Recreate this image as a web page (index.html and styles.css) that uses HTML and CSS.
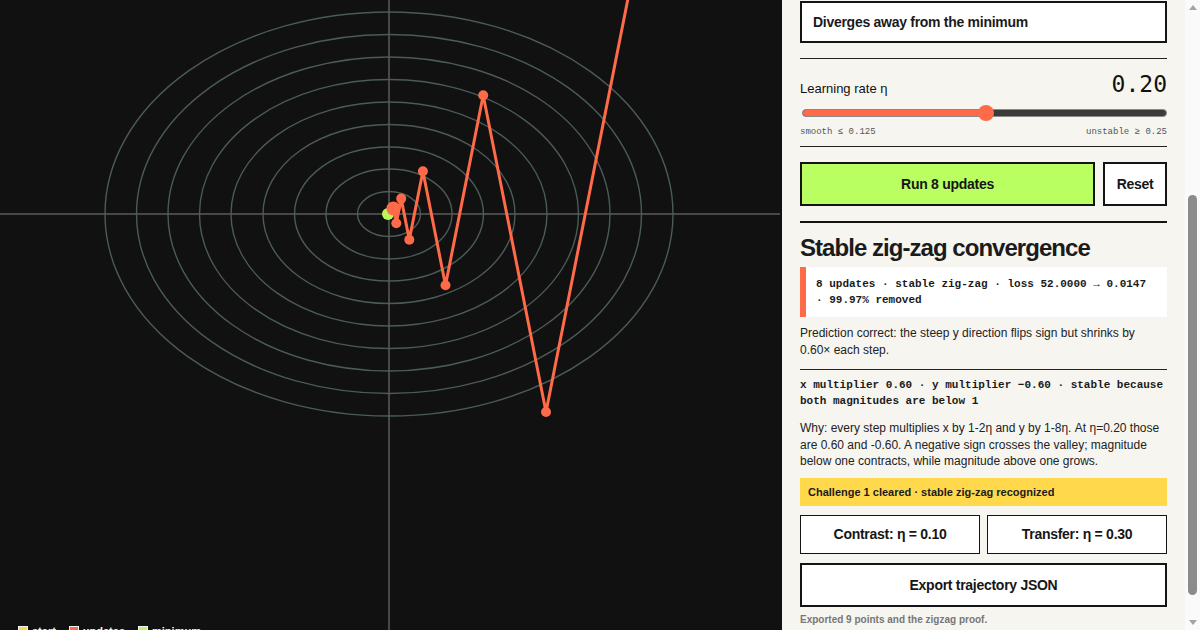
FILE: index.html
```html
<!DOCTYPE html>
<html lang="en">
<head>
<meta charset="utf-8">
<title>Zig-zag valley</title>
<link rel="stylesheet" href="styles.css">
</head>
<body>
<div class="app">
  <section class="stage">
    <svg class="plot" width="782" height="630" viewBox="0 0 782 630">
      <g class="contours">
        <ellipse cx="389" cy="214" rx="284" ry="202"/>
        <ellipse cx="389" cy="214" rx="252.5" ry="179.5"/>
        <ellipse cx="389" cy="214" rx="221" ry="157"/>
        <ellipse cx="389" cy="214" rx="189.5" ry="134.5"/>
        <ellipse cx="389" cy="214" rx="158" ry="112"/>
        <ellipse cx="389" cy="214" rx="126" ry="89.5"/>
        <ellipse cx="389" cy="214" rx="94.5" ry="67"/>
        <ellipse cx="389" cy="214" rx="63" ry="45"/>
        <ellipse cx="389" cy="214" rx="31.5" ry="22.5"/>
      </g>
      <g class="axes">
        <line x1="389" y1="0" x2="389" y2="630"/>
        <line x1="0" y1="214" x2="780" y2="214"/>
      </g>
      <circle class="minimum" cx="388" cy="214" r="6"/>
      <polyline class="path" points="650.7,-116 546,412 483.2,95.2 445.5,285.3 422.9,171.2 409.3,239.7 401.2,198.6 396.3,223.2 393.4,208.5"/>
      <g class="dots">
        <circle cx="546" cy="412" r="5"/>
        <circle cx="483.2" cy="95.2" r="5"/>
        <circle cx="445.5" cy="285.3" r="5"/>
        <circle cx="422.9" cy="171.2" r="5"/>
        <circle cx="409.3" cy="239.7" r="5"/>
        <circle cx="401.2" cy="198.6" r="5"/>
        <circle cx="396.3" cy="223.2" r="5"/>
        <circle cx="393.4" cy="208.5" r="7"/>
      </g>
    </svg>
    <div class="legend">
      <span class="legend-item"><i class="swatch swatch-start"></i>start</span>
      <span class="legend-item"><i class="swatch swatch-update"></i>updates</span>
      <span class="legend-item"><i class="swatch swatch-min"></i>minimum</span>
    </div>
  </section>

  <aside class="panel">
    <div class="intro">
      <p class="eyebrow">Challenge 1 · gradient descent</p>
      <h1 class="title">Zig-zag in a narrow valley</h1>
      <p class="lead">Loss f(x, y) = x² + 4y², starting at (4, 3). The valley is four times steeper along y than along x. Predict what 8 updates will do before you run them.</p>
    </div>
    <p class="ask">Your prediction for η = 0.20</p>
    <div class="options">
      <button class="option">Slides straight into the minimum</button>
      <button class="option option-picked">Zig-zags across the valley but settles</button>
      <button class="option option-last">Diverges away from the minimum</button>
    </div>

    <hr class="rule">

    <div class="rate">
      <div class="rate-head">
        <span class="rate-label">Learning rate η</span>
        <span class="rate-value">0.20</span>
      </div>
      <div class="slider">
        <div class="track"><div class="fill" style="width:50.3%"></div></div>
        <div class="thumb" style="left:50.3%"></div>
      </div>
      <div class="slider-marks">
        <span>smooth ≤ 0.125</span>
        <span>unstable ≥ 0.25</span>
      </div>
    </div>

    <hr class="rule">

    <div class="actions">
      <button class="btn btn-run">Run 8 updates</button>
      <button class="btn btn-reset">Reset</button>
    </div>

    <hr class="rule rule-thick">

    <h2 class="result-title">Stable zig-zag convergence</h2>
    <div class="stat">8 updates · stable zig-zag · loss 52.0000 → 0.0147 · 99.97% removed</div>
    <p class="copy">Prediction correct: the steep y direction flips sign but shrinks by 0.60× each step.</p>

    <hr class="rule">

    <p class="proof">x multiplier 0.60 · y multiplier −0.60 · stable because both magnitudes are below 1</p>
    <p class="copy copy-why">Why: every step multiplies x by 1-2η and y by 1-8η. At η=0.20 those are 0.60 and -0.60. A negative sign crosses the valley; magnitude below one contracts, while magnitude above one grows.</p>

    <div class="banner">Challenge 1 cleared · stable zig-zag recognized</div>

    <div class="pair">
      <button class="btn btn-thin">Contrast: η = 0.10</button>
      <button class="btn btn-thin">Transfer: η = 0.30</button>
    </div>
    <button class="btn btn-export">Export trajectory JSON</button>
    <p class="note">Exported 9 points and the zigzag proof.</p>
  </aside>

  <div class="scrollbar" aria-hidden="true">
    <span class="sb-btn sb-up"></span>
    <span class="sb-track"><span class="sb-thumb"></span></span>
    <span class="sb-btn sb-down"></span>
  </div>
</div>
<script src="script.js"></script>
</body>
</html>
```

FILE: styles.css
```css
* { box-sizing: border-box; }
html, body { margin: 0; height: 100%; }
body {
  font-family: "Liberation Sans", Arial, sans-serif;
  color: #1b1b1b;
  background: #111;
  overflow: hidden;
}
.app {
  display: grid;
  grid-template-columns: 782px 1fr 15px;
  height: 630px;
}

/* ---------- stage ---------- */
.stage {
  position: relative;
  background: #111111;
  overflow: hidden;
}
.plot { display: block; }
.contours ellipse {
  fill: none;
  stroke: #4a5b58;
  stroke-width: 1.4;
}
.axes line {
  stroke: #5b5b5b;
  stroke-width: 1.5;
}
.minimum { fill: #bdf75e; }
.path {
  fill: none;
  stroke: #ff6a48;
  stroke-width: 3;
  stroke-linejoin: round;
}
.dots circle { fill: #ff6a48; }
.legend {
  position: absolute;
  left: 18px;
  top: 625px;
  display: flex;
  gap: 13px;
  font: bold 11px/13px "Liberation Sans", Arial, sans-serif;
  color: #f2f2f2;
}
.legend-item { display: flex; align-items: flex-start; gap: 4px; }
.swatch {
  display: block;
  width: 10px;
  height: 10px;
  border: 1px solid #f4f4f4;
  margin-top: 1px;
}
.swatch-start { background: #ffd54a; }
.swatch-update { background: #ff6a48; }
.swatch-min { background: #bdf75e; }

/* ---------- panel ---------- */
.panel {
  position: relative;
  background: #f6f5f0;
  height: 630px;
  overflow: hidden;
  padding: 18px 18px 0;
}

/* scrollbar strip */
.scrollbar {
  display: flex;
  flex-direction: column;
  background: #fafafa;
  height: 630px;
}
.sb-btn {
  height: 15px;
  display: flex;
  justify-content: center;
  flex: none;
}
.sb-up { align-items: flex-start; padding-top: 5px; }
.sb-down { align-items: flex-end; padding-bottom: 5px; }
.sb-up::before,
.sb-down::before {
  content: "";
  display: block;
  width: 0;
  height: 0;
  border-left: 4.5px solid transparent;
  border-right: 4.5px solid transparent;
}
.sb-up::before { border-bottom: 5px solid #a3a3a3; }
.sb-down::before { border-top: 5px solid #a3a3a3; }
.sb-track {
  flex: 1;
  display: flex;
  flex-direction: column;
  align-items: center;
  padding-top: 180px;
}
.sb-thumb {
  display: block;
  width: 9px;
  height: 400px;
  border-radius: 4.5px;
  background: #8b8b8b;
}

.intro { margin-bottom: 14px; }
.eyebrow {
  margin: 0 0 6px;
  font: bold 10px "Liberation Mono", monospace;
  text-transform: uppercase;
  color: #666;
}
.title { margin: 0 0 8px; font-size: 22px; line-height: 26px; }
.lead { margin: 0; font-size: 12px; line-height: 17px; color: #333; }
.ask { margin: 0 0 10px; font-size: 13px; font-weight: bold; }

.options { display: flex; flex-direction: column; gap: 8px; margin-bottom: 15px; }
.option {
  display: block;
  width: 100%;
  height: 42px;
  padding: 0 11px;
  border: 2px solid #141414;
  background: #fff;
  color: #1b1b1b;
  font: bold 14px "Liberation Sans", Arial, sans-serif;
  letter-spacing: -0.02em;
  text-align: left;
}
.option-picked { background: #b9ff62; }

.rule { margin: 0; border: 0; border-top: 1px solid #222; }
.rule-thick { border-top-width: 2px; border-top-color: #141414; }

.rate { padding: 12px 0 8px; }
.rate-head {
  display: flex;
  justify-content: space-between;
  align-items: flex-end;
}
.rate-label { font-size: 13px; line-height: 16px; color: #111; }
.rate-value {
  font: 23px/26px "DejaVu Sans Mono", monospace;
  color: #111;
}
.slider {
  position: relative;
  height: 18px;
  margin: 7px 0 0;
  padding: 5px 0 0 2px;
}
.track {
  height: 8px;
  border-radius: 4px;
  background: #3b3b3b;
  border: 1px solid #8a8a8a;
  overflow: hidden;
}
.fill { height: 100%; background: #ff6a48; }
.thumb {
  position: absolute;
  top: 1px;
  width: 16px;
  height: 16px;
  margin-left: -7px;
  border-radius: 50%;
  background: #ff6a48;
}
.slider-marks {
  display: flex;
  justify-content: space-between;
  margin-top: 4px;
  font: 9px/12px "Courier New", "Liberation Mono", monospace;
  color: #555;
}

.actions { display: flex; gap: 8px; margin: 15px 0 15px; }
.btn {
  border: 2px solid #141414;
  background: #fff;
  color: #161616;
  font: bold 14px "Liberation Sans", Arial, sans-serif;
  letter-spacing: -0.02em;
  text-align: center;
  padding: 0;
}
.btn-run { flex: 1; height: 44px; background: #b9ff62; }
.btn-reset { width: 64px; height: 44px; }

.result-title {
  margin: 10px 0 4px;
  font-size: 24px;
  line-height: 30px;
  letter-spacing: -0.04em;
  color: #1b1b1b;
}
.stat {
  background: #fff;
  border-left: 6px solid #ff6a48;
  padding: 9px 10px 9px 10px;
  font: bold 11px/16px "Courier New", "Liberation Mono", monospace;
  color: #1b1b1b;
}
.copy {
  margin: 8px 0 10px;
  font-size: 12px;
  line-height: 17px;
  color: #222;
}
.proof {
  margin: 7px 0 11px;
  font: bold 11px/16px "Courier New", "Liberation Mono", monospace;
  color: #1b1b1b;
}
.copy-why { line-height: 16.5px; margin-bottom: 8px; }
.banner {
  height: 28px;
  display: flex;
  align-items: center;
  padding: 0 8px;
  background: #ffd84c;
  font-size: 11px;
  font-weight: bold;
  color: #1b1b1b;
  margin-top: 0;
}
.pair {
  display: grid;
  grid-template-columns: 1fr 1fr;
  gap: 7px;
  margin-top: 9px;
}
.btn-thin { height: 39px; border-width: 1px; }
.btn-export { display: block; width: 100%; height: 44px; margin-top: 9px; }
.note {
  margin: 7px 0 0;
  padding-bottom: 38px;
  font-size: 10px;
  font-weight: bold;
  color: #777;
}
```

FILE: script.js
```js
(function () {
  var panel = document.querySelector('.panel');
  var anchor = document.querySelector('.option-last');
  panel.scrollTop = anchor.offsetTop - 1;
})();
```
